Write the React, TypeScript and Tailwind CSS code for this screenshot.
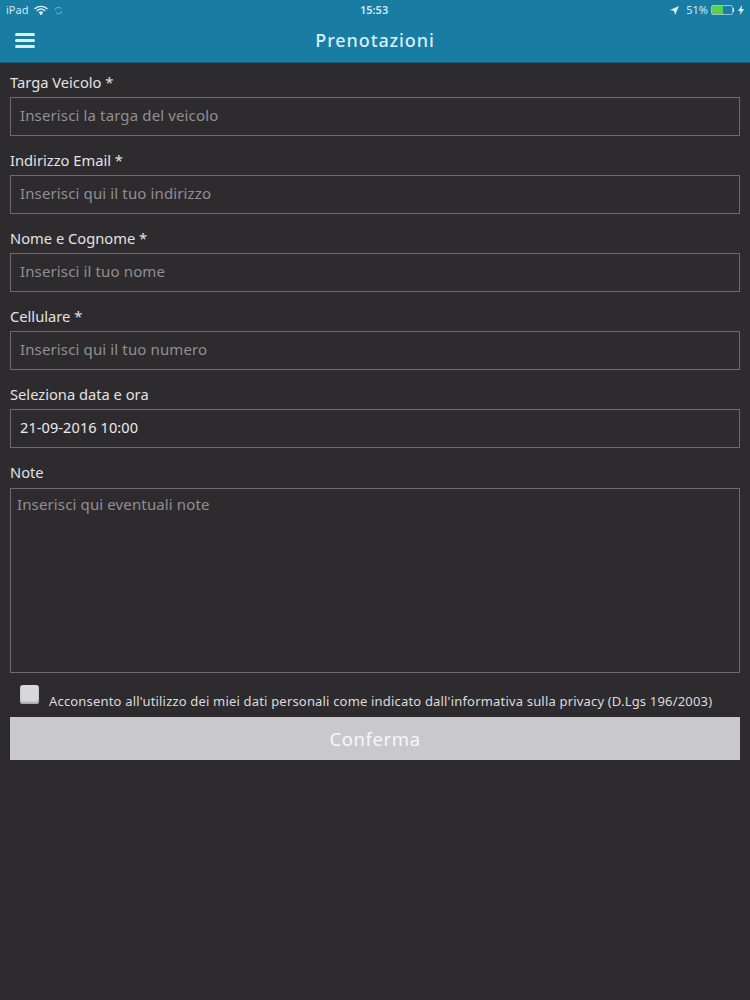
const font = { fontFamily: '"Noto Sans", "Liberation Sans", sans-serif' };

function Field({ label, placeholder, value }: { label: string; placeholder?: string; value?: string }) {
  return (
    <div className="flex flex-col">
      <div className="h-[34px] pt-[9px] text-[14.7px] leading-[20px] text-[#e2e2e2]">{label}</div>
      <div className="h-[39px] border border-[#6d6b6d] pl-[9px] pb-[2px] flex items-center">
        <span className={value ? "text-[14.5px] tracking-[0.1px] text-[#ececec]" : "text-[15px] tracking-[0.13px] text-[#918f92]"}>{value ?? placeholder}</span>
      </div>
      <div className="h-[5px]" />
    </div>
  );
}

export default function App() {
  return (
    <div style={font} className="w-[750px] h-[1000px] bg-[#2e2b2f] flex flex-col overflow-hidden">
      <header className="h-[63px] bg-[#187ca3] border-b border-[#1a5a72] flex flex-col text-[#cfeaf5]">
        <div className="h-[20px] flex items-center justify-between px-[6px] text-[11px] relative">
          <div className="flex items-center gap-[6px]">
            <span>iPad</span>
            <svg width="14" height="10" viewBox="0 0 14 10" fill="none" stroke="#d8f0fa" strokeWidth="1.4" strokeLinecap="round">
              <path d="M1 3.6 C4.5 .6 9.5 .6 13 3.6" />
              <path d="M3.2 5.6 C5.4 3.8 8.6 3.8 10.8 5.6" />
              <path d="M5.4 7.6 C6.3 6.9 7.7 6.9 8.6 7.6" />
              <circle cx="7" cy="9" r=".5" fill="#d8f0fa" />
            </svg>
            <svg width="9" height="9" viewBox="0 0 9 9" fill="none" stroke="#6fb6d1" strokeWidth="1">
              <path d="M1 4 A3.5 3.5 0 0 1 7 2.5 M8 5 A3.5 3.5 0 0 1 2 6.5" />
            </svg>
          </div>
          <span className="absolute left-[360px] top-[2px] text-[11px] font-semibold leading-[15px]">15:53</span>
          <div className="flex items-center gap-[4px]">
            <svg width="9" height="9" viewBox="0 0 9 9" fill="#d8f0fa"><path d="M9 0 L0 4 L4 5 L5 9 Z" /></svg>
            <span className="ml-[3px]">51%</span>
            <div className="flex items-center -ml-[1px]">
              <div className="w-[22px] h-[10px] border border-[#8fc4d8] rounded-[2px]">
                <div className="w-[11px] h-full bg-[#5bd04a]" />
              </div>
              <div className="w-[1px] h-[4px] bg-[#cfeaf5]" />
            </div>
            <svg width="6" height="10" viewBox="0 0 6 10" fill="#d8f0fa"><path d="M4 0 L0 6 H2.5 L2 10 L6 4 H3.5 Z" /></svg>
          </div>
        </div>
        <div className="flex-1 relative flex items-center justify-center pb-[2px]">
          <div className="absolute left-[15px] top-[13px] w-[20px] flex flex-col gap-[3px]">
            <div className="h-[3px] rounded-full bg-[#d5f0fa]" />
            <div className="h-[3px] rounded-full bg-[#d5f0fa]" />
            <div className="h-[3px] rounded-full bg-[#d5f0fa]" />
          </div>
          <span className="text-[18px] tracking-[0.9px] text-[#d5f0fa] font-medium">Prenotazioni</span>
        </div>
      </header>
      <main className="px-[10px] flex flex-col">
        <Field label="Targa Veicolo *" placeholder="Inserisci la targa del veicolo" />
        <Field label="Indirizzo Email *" placeholder="Inserisci qui il tuo indirizzo" />
        <Field label="Nome e Cognome *" placeholder="Inserisci il tuo nome" />
        <Field label="Cellulare *" placeholder="Inserisci qui il tuo numero" />
        <Field label="Seleziona data e ora" value="21-09-2016 10:00" />
        <div className="h-[35px] pt-[9px] text-[14.7px] leading-[20px] text-[#e2e2e2]">Note</div>
        <div className="h-[185px] border border-[#6d6b6d] pl-[6px] pt-[5px] text-[15px] tracking-[0.13px] leading-[20px] text-[#918f92]">
          Inserisci qui eventuali note
        </div>
        <div className="h-[44px] flex pl-[10px]">
          <div className="mt-[12px] w-[19px] h-[19px] rounded-[3px] bg-[#d8d8da] shadow-[inset_0_-2px_2px_#a8a8aa]" />
          <span className="ml-[10px] mt-[19px] text-[13px] tracking-[0.18px] leading-[18px] text-[#dcdcdc] whitespace-nowrap">
            Acconsento all'utilizzo dei miei dati personali come indicato dall'informativa sulla privacy (D.Lgs 196/2003)
          </span>
        </div>
        <button className="h-[43px] bg-[#c9c9cd] text-[#f7f7f7] text-[18.5px] tracking-[0.6px] flex items-center justify-center">
          Conferma
        </button>
      </main>
    </div>
  );
}
